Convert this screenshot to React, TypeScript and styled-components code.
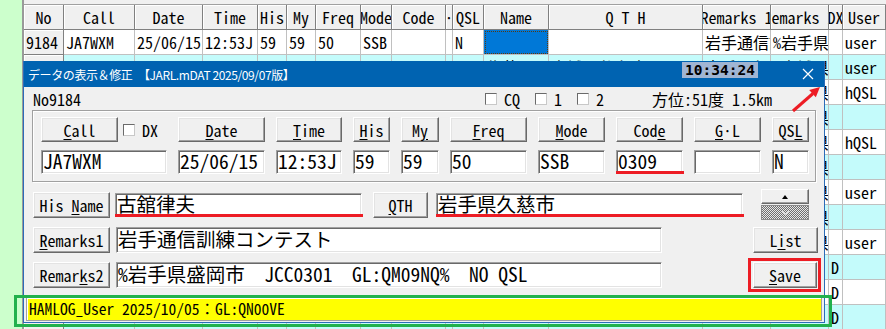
import React from 'react';
import styled, { createGlobalStyle, css } from 'styled-components';

const MONO = `"Noto Sans Mono CJK JP", "Noto Sans CJK JP", "DejaVu Sans Mono", monospace`;
const UI = `"Noto Sans CJK JP", "Noto Sans", sans-serif`;
const RED = '#ed1c24';
const GREEN = '#22b14c';

const GlobalStyle = createGlobalStyle`
  * { box-sizing: border-box; }
  html, body { margin: 0; padding: 0; }
  body {
    width: 886px;
    height: 329px;
    overflow: hidden;
    font-family: ${MONO};
    color: #000;
    background: #ccffcc;
  }
`;

type Col = { key: string; title: string; width: number };

const columns: Col[] = [
  { key: 'no', title: 'No', width: 40 },
  { key: 'call', title: 'Call', width: 71 },
  { key: 'date', title: 'Date', width: 68 },
  { key: 'time', title: 'Time', width: 55 },
  { key: 'his', title: 'His', width: 29 },
  { key: 'my', title: 'My', width: 29 },
  { key: 'freq', title: 'Freq', width: 45 },
  { key: 'mode', title: 'Mode', width: 31 },
  { key: 'code', title: 'Code', width: 54 },
  { key: 'gl', title: 'G·L', width: 7 },
  { key: 'qsl', title: 'QSL', width: 31 },
  { key: 'name', title: 'Name', width: 65 },
  { key: 'qth', title: 'Q T H', width: 154 },
  { key: 'rem1', title: 'Remarks 1', width: 68 },
  { key: 'rem2', title: 'Remarks 2', width: 58 },
  { key: 'dx', title: 'DX', width: 14 },
  { key: 'user', title: 'User', width: 0 },
];

const template = columns.map((c) => (c.width ? `${c.width}px` : '1fr')).join(' ');

type Row = Record<string, string>;

// the last row only peeks out under the dialog, so it holds just the DX flag
const rows: Row[] = [
  { no: '9184', call: 'JA7WXM', date: '25/06/15', time: '12:53J', his: '59', my: '59', freq: '50', mode: 'SSB', qsl: 'N', rem1: '岩手通信訓練コンテスト', rem2: '%岩手県盛岡市 JCC0301', user: 'user' },
  { no: '9185', call: 'JA7BME', date: '25/06/15', time: '12:58J', his: '59', my: '59', freq: '50', mode: 'SSB', code: '0302', qsl: 'N', name: '佐藤', qth: '宮城県仙台市', rem1: '岩手通信訓練', rem2: '%宮城県仙台市', user: 'user' },
  { no: '9186', call: 'JH7XMO', date: '25/06/22', time: '09:14J', his: '599', my: '599', freq: '7', mode: 'CW', code: '0601', qsl: 'J', name: '鈴木', qth: '山形県山形市', rem1: 'QSLカード', rem2: '%山形県山形市', user: 'hQSL' },
  { no: '9187', call: 'JR7GZN', date: '25/06/29', time: '10:02J', his: '59', my: '59', freq: '144', mode: 'FM', code: '0401', qsl: 'N', name: '高橋', qth: '秋田県秋田市', rem1: '移動運用', rem2: '%秋田県秋田市' },
  { no: '9188', call: 'JE7JHM', date: '25/07/06', time: '08:45J', his: '599', my: '599', freq: '14', mode: 'FT8', code: '0201', qsl: 'J', name: '田中', qth: '青森県青森市', rem1: 'FT8', rem2: '%青森県青森市', user: 'hQSL' },
  { no: '9189', call: 'JA7FTR', date: '25/07/13', time: '11:20J', his: '59', my: '59', freq: '430', mode: 'FM', code: '0701', qsl: 'N', name: '伊藤', qth: '福島県福島市', rem2: '%福島県福島市' },
  { no: '9190', call: 'JO7KMB', date: '25/07/20', time: '13:05J', his: '59', my: '59', freq: '50', mode: 'SSB', code: '0303', qsl: 'N', name: '渡辺', qth: '岩手県花巻市', rem2: '%岩手県花巻市', user: 'user' },
  { no: '9191', call: 'JK7SDH', date: '25/08/03', time: '09:33J', his: '59', my: '59', freq: '21', mode: 'SSB', code: '0304', qsl: 'N', name: '山本', qth: '岩手県北上市', rem2: '%岩手県北上市' },
  { no: '9192', call: 'JF7PLA', date: '25/08/10', time: '15:47J', his: '599', my: '599', freq: '10', mode: 'CW', code: '0305', qsl: 'N', name: '中村', qth: '岩手県一関市', rem2: '%岩手県一関市', user: 'user' },
  { no: '9193', call: 'JA7ZAX', date: '25/08/17', time: '07:58J', his: '59', my: '59', freq: '7', mode: 'SSB', code: '100110', qsl: 'N', name: '小林', qth: '東京都', dx: 'D' },
  { no: '9194', call: 'JL7CQE', date: '25/08/24', time: '10:11J', his: '59', my: '59', freq: '7', mode: 'SSB', code: '110101', qsl: 'N', name: '加藤', qth: '北海道', dx: 'D' },
  { no: '', dx: 'D' },
];

const Desktop = styled.div`
  position: relative;
  display: flex;
  width: 886px;
  height: 329px;
  overflow: hidden;
`;

const SidePanel = styled.div`
  width: 22px;
  flex: none;
  background: #ccffcc;
`;

const Sheet = styled.div`
  flex: 1;
  padding-top: 4px;
  background: #f0f0f0;
  border-left: 2px solid #9a9a9a;
  overflow: hidden;
`;

const Table = styled.div`
  border-top: 1px solid #a0a0a0;
`;

const GridRow = styled.div<{ $tone: 'head' | 'white' | 'cyan' }>`
  display: grid;
  grid-template-columns: ${template};
  height: 25px;
  background: ${(p) => (p.$tone === 'cyan' ? '#c4fbfb' : p.$tone === 'white' ? '#fff' : '#f0f0f0')};
`;

const Cell = styled.div<{ $selected?: boolean }>`
  display: flex;
  align-items: center;
  padding: 0 2px;
  overflow: hidden;
  white-space: nowrap;
  font-size: 16px;
  line-height: 1;
  border-right: 1px solid #c0c0c0;
  border-bottom: 1px solid #c0c0c0;
  ${(p) =>
    p.$selected &&
    css`
      background: #0078d7;
      outline: 1px dotted #5a3a10;
      outline-offset: -2px;
    `}
`;

const HeadCell = styled(Cell)`
  justify-content: center;
  padding: 0;
  background: #f0f0f0;
  border-right-color: #808080;
  border-bottom-color: #808080;
  box-shadow: inset 1px 1px #fff;
`;

const NoCell = styled(HeadCell)`
  justify-content: flex-start;
  padding-left: 2px;
`;

const Dialog = styled.section`
  position: absolute;
  left: 23px;
  top: 61px;
  width: 802px;
  height: 262px;
  display: flex;
  flex-direction: column;
  background: #f0f0f0;
  border: 1px solid #2b6cb8;
  border-top: none;
`;

const TitleBar = styled.header`
  display: flex;
  align-items: center;
  height: 26px;
  padding-left: 4px;
  background: #0063b1;
  color: #fff;
`;

const Title = styled.h1`
  margin: 0;
  font-family: ${UI};
  font-weight: 400;
  font-size: 12px;
  letter-spacing: -0.4px;
  white-space: nowrap;
`;

const Clock = styled.div`
  margin-left: auto;
  align-self: flex-start;
  margin-top: 1px;
  width: 76px;
  height: 16px;
  display: flex;
  align-items: center;
  justify-content: center;
  background: #a0b5d3;
  color: #000;
  font-family: "DejaVu Sans Mono", monospace;
  font-weight: 700;
  font-size: 14.5px;
`;

const CloseButton = styled.div`
  align-self: stretch;
  width: 32px;
  margin-left: 34px;
  display: flex;
  align-items: center;
  justify-content: center;
`;

const Body = styled.div`
  flex: 1;
  display: flex;
  flex-direction: column;
`;

const InfoRow = styled.div`
  display: grid;
  grid-template-columns: 452px 167px 1fr;
  align-items: center;
  height: 20px;
  padding-left: 9px;
  font-size: 16px;
`;

const Checks = styled.div`
  display: flex;
  gap: 15px;
`;

const Check = styled.label`
  display: flex;
  align-items: center;
  gap: 7px;
  font-size: 16px;
  line-height: 1;
`;

const CheckBox = styled.span`
  flex: none;
  width: 12px;
  height: 12px;
  background: #fff;
  border: 1px solid;
  border-color: #6a6a6a #c8c8c8 #c8c8c8 #6a6a6a;
`;

const GroupBox = styled.fieldset`
  margin: 3px 8px 0 8px;
  padding: 6px 7px 7px 8px;
  border: 1px solid #a0a0a0;
  box-shadow: inset 1px 1px #fff, 1px 1px #fff;
  display: grid;
  grid-template-columns: 126px 87px 66px 37px 38px 77px 67px 67px 67px 37px;
  grid-template-rows: 25px 24px;
  column-gap: 11px;
  row-gap: 8px;
  min-width: 0;
`;

const CallCell = styled.div`
  display: flex;
  align-items: center;
  gap: 5px;
`;

const Button = styled.button<{ $w?: number; $h?: number }>`
  flex: none;
  width: ${(p) => (p.$w ? `${p.$w}px` : '100%')};
  height: ${(p) => p.$h ?? 25}px;
  padding: 0;
  display: flex;
  align-items: center;
  justify-content: center;
  font-family: ${MONO};
  font-size: 16px;
  line-height: 1;
  color: #000;
  background: #f0f0f0;
  border: 1px solid;
  border-color: #fff #696969 #696969 #fff;
  box-shadow: inset -1px -1px #a0a0a0, inset 1px 1px #e3e3e3;
  white-space: pre;
`;

const Key = styled.span`
  text-decoration: underline;
  text-underline-offset: 2px;
`;

const Field = styled.div<{ $w?: number; $h?: number; $mark?: boolean }>`
  position: relative;
  flex: none;
  width: ${(p) => (p.$w ? `${p.$w}px` : '100%')};
  height: ${(p) => p.$h ?? 24}px;
  padding: 0 1px 2px 1px;
  display: flex;
  align-items: center;
  font-size: 19.5px;
  line-height: 1;
  white-space: pre;
  background: #fff;
  border: 1px solid;
  border-color: #a0a0a0 #fff #fff #a0a0a0;
  box-shadow: inset 1px 1px #696969, inset -1px -1px #e3e3e3;
  ${(p) =>
    p.$mark &&
    css`
      &::after {
        content: '';
        position: absolute;
        left: -1px;
        right: -2px;
        bottom: -1px;
        height: 3px;
        background: ${RED};
      }
    `}
`;

const FormRow = styled.div<{ $h: number; $top: number }>`
  display: flex;
  align-items: center;
  height: ${(p) => p.$h}px;
  margin-top: ${(p) => p.$top}px;
  padding: 0 6px 0 9px;
`;

const Spin = styled.div`
  flex: none;
  width: 48px;
  height: 31px;
  display: flex;
  flex-direction: column;
  gap: 1px;
`;

const SpinUp = styled.div`
  flex: 1;
  display: flex;
  align-items: center;
  justify-content: center;
  background: #f0f0f0;
  border: 1px solid;
  border-color: #fff #696969 #696969 #fff;
  box-shadow: inset -1px -1px #a0a0a0;
  &::before {
    content: '';
    border-left: 3px solid transparent;
    border-right: 3px solid transparent;
    border-bottom: 4px solid #000;
  }
`;

const SpinDown = styled.div`
  flex: 1;
  display: flex;
  align-items: center;
  justify-content: center;
  border: 1px solid #8a8a8a;
  background: repeating-conic-gradient(#6e6e6e 0% 25%, #e6e6e6 0% 50%) 0 0 / 2px 2px;
`;

const Marked = styled.div`
  position: relative;
  margin-left: auto;
  &::after {
    content: '';
    position: absolute;
    left: -5px;
    right: -3px;
    top: -4px;
    bottom: -4px;
    border: 3px solid ${RED};
    pointer-events: none;
  }
`;

const RightButton = styled(Button)`
  margin-left: auto;
`;

const StatusBar = styled.div`
  position: relative;
  height: 24px;
  margin: 9px 2px 0 2px;
  padding: 0 0 1px 2px;
  display: flex;
  align-items: center;
  font-size: 15.5px;
  line-height: 1;
  white-space: nowrap;
  background: #ffff00;
  border: 1px solid #a0a0a0;
  box-shadow: inset 1px 1px #fff;
  &::after {
    content: '';
    position: absolute;
    left: -13px;
    right: -11px;
    top: -3px;
    bottom: -7px;
    border: 3px solid ${GREEN};
    pointer-events: none;
  }
`;

const Arrow = styled.svg`
  position: absolute;
  left: 788px;
  top: 84px;
  pointer-events: none;
`;

const Label = (text: string, key: number) => (
  <span>
    {text.slice(0, key)}
    <Key>{text[key]}</Key>
    {text.slice(key + 1)}
  </span>
);

const logFields = [
  { label: 'Call', key: 0, value: 'JA7WXM' },
  { label: 'Date', key: 0, value: '25/06/15' },
  { label: 'Time', key: 0, value: '12:53J' },
  { label: 'His', key: 0, value: '59' },
  { label: 'My', key: 1, value: '59' },
  { label: 'Freq', key: 0, value: '50' },
  { label: 'Mode', key: 0, value: 'SSB' },
  { label: 'Code', key: 3, value: '0309', mark: true },
  { label: 'G·L', key: 0, value: '' },
  { label: 'QSL', key: 2, value: 'N' },
];

const Grid = () => (
  <Table>
    <GridRow $tone="head">
      {columns.map((c) => (
        <HeadCell key={c.key}>{c.title}</HeadCell>
      ))}
    </GridRow>
    {rows.map((r, i) => (
      <GridRow key={i} $tone={i % 2 ? 'cyan' : 'white'}>
        {columns.map((c) =>
          c.key === 'no' ? (
            <NoCell key={c.key}>{r.no}</NoCell>
          ) : (
            <Cell key={c.key} $selected={i === 0 && c.key === 'name'}>
              {r[c.key] ?? ''}
            </Cell>
          ),
        )}
      </GridRow>
    ))}
  </Table>
);

const EditDialog = () => (
  <Dialog>
    <TitleBar>
      <Title>データの表示＆修正　【JARL.mDAT 2025/09/07版】</Title>
      <Clock>10:34:24</Clock>
      <CloseButton>
        <svg width="12" height="12" viewBox="0 0 12 12">
          <path d="M1 1 L11 11 M11 1 L1 11" stroke="#fff" strokeWidth="1.2" fill="none" />
        </svg>
      </CloseButton>
    </TitleBar>
    <Body>
      <InfoRow>
        <span>No9184</span>
        <Checks>
          <Check>
            <CheckBox />
            CQ
          </Check>
          <Check>
            <CheckBox />1
          </Check>
          <Check>
            <CheckBox />2
          </Check>
        </Checks>
        <span>方位:51度 1.5km</span>
      </InfoRow>

      <GroupBox>
        {logFields.map((f) =>
          f.label === 'Call' ? (
            <CallCell key={f.label}>
              <Button $w={77}>{Label(f.label, f.key)}</Button>
              <Check>
                <CheckBox />
                DX
              </Check>
            </CallCell>
          ) : (
            <Button key={f.label}>{Label(f.label, f.key)}</Button>
          ),
        )}
        {logFields.map((f) => (
          <Field key={f.label} $mark={f.mark}>
            {f.value}
          </Field>
        ))}
      </GroupBox>

      <FormRow $h={31} $top={7}>
        <Button $w={77} $h={26}>
          {Label('His Name', 4)}
        </Button>
        <Field $w={247} $mark style={{ marginLeft: 5 }}>
          古舘律夫
        </Field>
        <Button $w={55} $h={26} style={{ marginLeft: 11 }}>
          {Label('QTH', 0)}
        </Button>
        <Field $w={307} $mark style={{ marginLeft: 8 }}>
          岩手県久慈市
        </Field>
        <Spin style={{ marginLeft: 18 }}>
          <SpinUp />
          <SpinDown>
            <svg width="9" height="6" viewBox="0 0 9 6">
              <path d="M1 1 L4.5 4.5 L8 1" stroke="#d8d8d8" strokeWidth="1" fill="none" />
            </svg>
          </SpinDown>
        </Spin>
      </FormRow>

      <FormRow $h={26} $top={7}>
        <Button $w={77} $h={26}>
          {Label('Remarks1', 0)}
        </Button>
        <Field $w={546} $h={26} style={{ marginLeft: 6 }}>
          岩手通信訓練コンテスト
        </Field>
        <RightButton $w={65} $h={26}>
          {Label('List', 1)}
        </RightButton>
      </FormRow>

      <FormRow $h={26} $top={9}>
        <Button $w={77} $h={26}>
          {Label('Remarks2', 5)}
        </Button>
        <Field $w={546} $h={26} style={{ marginLeft: 6 }}>
          {'%岩手県盛岡市  JCC0301  GL:QM09NQ%  NO QSL'}
        </Field>
        <Marked>
          <Button $w={64} $h={26} style={{ marginRight: 1 }}>
            {Label('Save', 0)}
          </Button>
        </Marked>
      </FormRow>

      <StatusBar>HAMLOG_User 2025/10/05：GL:QN00VE</StatusBar>
    </Body>
  </Dialog>
);

const App = () => (
  <>
    <GlobalStyle />
    <Desktop>
      <SidePanel />
      <Sheet>
        <Grid />
      </Sheet>
      <EditDialog />
      <Arrow width="36" height="30" viewBox="0 0 36 30">
        <line x1="5" y1="27" x2="25" y2="9.5" stroke={RED} strokeWidth="3" />
        <polygon points="32,3 27.8,13.3 21.2,5.9" fill={RED} />
      </Arrow>
    </Desktop>
  </>
);

export default App;
